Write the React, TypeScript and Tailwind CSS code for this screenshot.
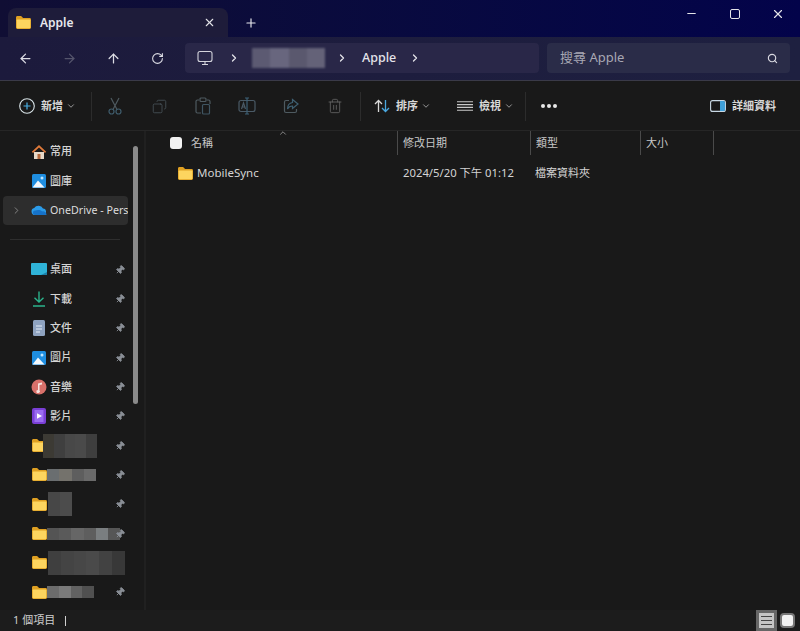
import React from "react";
import {ArrowLeft, ArrowRight, ArrowUp, ChevronDown, ChevronRight, ChevronUp, Copy, Minus, Pin, Plus, RotateCw, Search, Trash2, X} from "lucide-react";

const Folder = ({className = "w-[15px] h-[13px]"}: {className?: string}) => (
    <svg viewBox="0 0 15 13" className={className}>
        <path d="M0 1.5C0 .7.6 0 1.4 0h3.700l2 2h6.500c.8 0 1.400.6 1.400 1.400v8.200c0 .8-.6 1.400-1.400 1.400H1.400C.6 13 0 12.400 0 11.600z" fill="#dfa022" />
        <path d="M.7 4.200c0-.4.3-.7.7-.7h12.200c.4 0 .7.3.7.7v7.400c0 .4-.3.7-.7.7H1.400c-.4 0-.7-.3-.7-.7z" fill="#fdd55f" />
    </svg>
);

const Home = () => (
    <svg viewBox="0 0 16 16" className="w-4 h-4">
        <path d="M3 8h10v7H3z" fill="#e8d9c8" />
        <path d="M6.500 10h3v5h-3z" fill="#b4683c" />
        <path d="M8 1 .8 7.800l1.200 1.200L8 3.400 14 9l1.200-1.200z" fill="#e07a3a" />
    </svg>
);

const Photo = ({className = ""}: {className?: string}) => (
    <svg viewBox="0 0 16 16" className={`w-4 h-4 ${className}`}>
        <rect x="1" y="1" width="14" height="14" rx="1.500" fill="#1f8ee0" />
        <circle cx="11" cy="5" r="1.500" fill="#bfe6ff" />
        <path d="M1.500 14.500 7 7.500l6.500 7z" fill="#f4f8fc" />
    </svg>
);

const Desktop = () => (
    <svg viewBox="0 0 16 13" className="w-4 h-[13px]">
        <rect width="16" height="12" rx="1" fill="#2fb3d8" />
        <path d="M10 12h6v-3z" fill="#1b7fa8" />
    </svg>
);

const Doc = () => (
    <svg viewBox="0 0 12 16" className="w-3 h-4 mx-[2px]">
        <rect width="12" height="16" rx="1.500" fill="#8fa3c0" />
        <path d="M3 6h6M3 9h6M3 12h4" stroke="#e6edf6" strokeWidth="1.200" />
    </svg>
);

const Music = () => (
    <svg viewBox="0 0 16 16" className="w-4 h-4">
        <circle cx="8" cy="8" r="7.500" fill="#d8706a" />
        <path d="M7 11V4.500l4-1v2l-2.500.6V11.500a1.800 1.500 0 1 1-1.500-.5z" fill="#f6e4e0" />
    </svg>
);

const Video = () => (
    <svg viewBox="0 0 14 16" className="w-[14px] h-4 mx-[1px]">
        <rect width="14" height="16" rx="2" fill="#7a3fd6" />
        <rect x="2.500" y="2" width="9" height="12" fill="#9a6cf0" />
        <path d="M5 5.200 10 8l-5 2.800z" fill="#fff" />
    </svg>
);

const Cloud = () => (
    <svg viewBox="0 0 16 10" className="w-4 h-[10px]">
        <path d="M4 10a3.500 3.500 0 0 1-.8-6.900A5 5 0 0 1 12 3.500 3.300 3.300 0 0 1 12.500 10z" fill="#2b9be8" />
        <path d="M4 10a2.200 2.200 0 0 1 .2-4.400c2-1 5-1 7 .8 1.800-.6 4 .5 4.400 3.600z" fill="#1672c8" />
    </svg>
);

const Download = () => (
    <svg viewBox="0 0 14 16" fill="none" stroke="#2bb38c" strokeWidth="1.400" className="w-[14px] h-4 mx-[1px]">
        <path d="M7 .5v10.500M2.500 6.800 7 11l4.500-4.200M1 15h12" />
    </svg>
);

const PcIcon = () => (
    <svg viewBox="0 0 16 16" fill="none" stroke="#d4d4dc" strokeWidth="1.100" className="w-4 h-4">
        <rect x="1" y="1.500" width="14" height="10" rx="2" />
        <path d="M5 14.500h6M8 11.500v3" />
    </svg>
);

const ScissorsIcon = () => (
    <svg viewBox="0 0 16 18" fill="none" stroke="#3f5c6c" strokeWidth="1.200" className="w-4 h-[18px]">
        <path d="M4 1 10 12.500M12 1 6 12.500" stroke="#4e5a60" />
        <circle cx="4.500" cy="14.500" r="2.500" />
        <circle cx="11.500" cy="14.500" r="2.500" />
    </svg>
);

const PasteIcon = () => (
    <svg viewBox="0 0 16 18" fill="none" stroke="#4e5a60" strokeWidth="1.200" className="w-4 h-[18px]">
        <path d="M4 3H2.500A1.500 1.500 0 0 0 1 4.500v10A1.500 1.500 0 0 0 2.500 16H6M12 3h1.500A1.500 1.500 0 0 1 15 4.500V7" />
        <rect x="5" y="1" width="6" height="3.500" rx="1" />
        <rect x="7.500" y="7.500" width="7" height="9.500" rx="1" stroke="#3f5562" />
    </svg>
);

const RenameIcon = () => (
    <svg viewBox="0 0 18 18" fill="none" stroke="#4a5a66" strokeWidth="1.200" className="w-[18px] h-[18px]">
        <rect x="1" y="3.500" width="16" height="11" rx="2" />
        <path d="M9 1v16M7 1h4M7 17h4" stroke="#3c6076" />
        <path d="M3.500 12 5.500 6l2 6M4.200 10h2.600" />
    </svg>
);

const ShareIcon = () => (
    <svg viewBox="0 0 16 16" fill="none" stroke="#4e5a60" strokeWidth="1.200" className="w-4 h-4">
        <path d="M6 2.500H3A1.500 1.500 0 0 0 1.500 4v9A1.500 1.500 0 0 0 3 14.500h9a1.500 1.500 0 0 0 1.500-1.500v-2" />
        <path d="M9.500 1.500 15 6l-5.500 4.500V8C7 8 5.500 9 4.500 11c0-3.500 2-6 5-6.500z" stroke="#3f6072" />
    </svg>
);

const SortIcon = () => (
    <svg viewBox="0 0 16 14" fill="none" strokeWidth="1.300" className="w-4 h-[14px]">
        <path d="M4.500 13V1.500M1 5l3.500-3.500L8 5" stroke="#d8d8d8" />
        <path d="M11.500 1v11.500M8 9l3.500 3.500L15 9" stroke="#4aa8e0" />
    </svg>
);

const ViewIcon = () => (
    <svg viewBox="0 0 16 10" stroke="#c8c8c8" strokeWidth="1.100" className="w-4 h-[10px]">
        <path d="M0 .8h16M0 3.600h16M0 6.400h16M0 9.200h16" />
    </svg>
);

const DetailsIcon = () => (
    <svg viewBox="0 0 16 12" fill="none" className="w-4 h-3">
        <rect x=".6" y=".6" width="14.800" height="10.800" rx="2" stroke="#c8d8e4" strokeWidth="1.100" />
        <path d="M10 1h3.500A1.500 1.500 0 0 1 15 2.500v7a1.500 1.500 0 0 1-1.500 1.500H10z" fill="#3f9fd8" />
    </svg>
);

const Mosaic = ({cells, className}: {cells: string[]; className: string}) => (
    <div className={`flex ${className}`}>
        {cells.map((c, i) => <div key={i} className={`flex-1 ${c}`} />)}
    </div>
);

const ToolBtn = ({children}: {children: React.ReactNode}) => (
    <div className="w-11 flex justify-center items-center">{children}</div>
);

const Divider = () => <div className="w-px h-[29px] bg-[#2c2c2c]" />;

const NavRow = ({icon, label, pinned}: {icon: React.ReactNode; label?: React.ReactNode; pinned?: boolean}) => (
    <div className="h-[29.33px] flex items-center pl-[31px] w-[128px] shrink-0">
        <div className="w-4 flex justify-center shrink-0">{icon}</div>
        <div className="ml-[3px] flex-1 min-w-0 flex items-center text-[11px] font-medium text-[#d4d4d4]">{label}</div>
        {pinned && <Pin size={10} className="mr-[3px] text-[#8a8f96] fill-[#8a8f96] rotate-45 shrink-0" />}
    </div>
);

const mosaics = [
    {cls: "w-[54px] h-[24px] -ml-[7px]", cells: ["bg-[#3c3a34]", "bg-[#3f3f3f]", "bg-[#484848]", "bg-[#4a4a4a]", "bg-[#3e3e3e]"]},
    {cls: "w-[49px] h-[12px] -ml-[3px]", cells: ["bg-[#6a6e70]", "bg-[#74726c]", "bg-[#5e5e5e]", "bg-[#6a6a6a]"]},
    {cls: "w-[24px] h-[24px] -ml-[2px]", cells: ["bg-[#474747]", "bg-[#4c4c4c]"]},
    {cls: "w-[73px] h-[12px] -ml-[3px]", cells: ["bg-[#545454]", "bg-[#5a5a5a]", "bg-[#666666]", "bg-[#5e5e5e]", "bg-[#7a7e80]", "bg-[#565656]"]},
    {cls: "w-[77px] h-[24px] -ml-[2px]", cells: ["bg-[#3f3f3f]", "bg-[#444444]", "bg-[#474747]", "bg-[#4a4a4a]", "bg-[#424242]", "bg-[#383838]"]},
    {cls: "w-[47px] h-[12px] -ml-[3px]", cells: ["bg-[#6c6c6c]", "bg-[#7a7a7a]", "bg-[#626262]", "bg-[#505050]"]},
];

const columns = [
    {w: "w-[133px]", text: "修改日期"},
    {w: "w-[110px]", text: "類型"},
    {w: "w-[74px]", text: "大小"},
];

export default function App() {
    return (
        <div className="w-[800px] h-[631px] flex flex-col overflow-hidden bg-[#191919] text-[#d8d8d8] font-['Noto_Sans','Noto_Sans_CJK_TC',sans-serif]">
            {/* title bar */}
            <div className="h-[37px] shrink-0 flex items-end pl-2 bg-gradient-to-r from-[#100e34] to-[#03034a]">
                <div className="w-[220px] h-[29px] rounded-t-lg bg-[#1e1c3a] flex items-center pl-2 pr-3">
                    <Folder />
                    <span className="ml-[9px] text-[12px] font-semibold text-[#e8e8ee]">Apple</span>
                    <X size={13} className="ml-auto text-[#e4e4e8]" />
                </div>
                <div className="ml-4 h-[29px] flex items-center"><Plus size={14} strokeWidth={2} className="text-[#e8e8ee]" /></div>
                <div className="ml-auto self-start flex">
                    <div className="w-[43px] h-[27px] flex items-center justify-center"><Minus size={13} className="text-[#e4e4e8]" /></div>
                    <div className="w-[43px] h-[27px] flex items-center justify-center"><div className="w-[10px] h-[10px] rounded-[2px] border-[1.5px] border-[#e4e4e8]" /></div>
                    <div className="w-[43px] h-[27px] flex items-center justify-center mr-[1px]"><X size={14} className="text-[#e4e4e8]" /></div>
                </div>
            </div>

            {/* nav row */}
            <div className="h-[44px] shrink-0 flex items-start pt-[6px] bg-gradient-to-r from-[#1c1a3c] to-[#1e2040] border-b border-[#3a3a48]">
                <div className="w-[185px] h-[30px] flex items-center pl-[3px]">
                    <div className="w-11 flex justify-center"><ArrowLeft size={15} className="text-[#dcdce4]" /></div>
                    <div className="w-11 flex justify-center"><ArrowRight size={15} className="text-[#55556c]" /></div>
                    <div className="w-11 flex justify-center"><ArrowUp size={15} className="text-[#dcdce4]" /></div>
                    <div className="w-11 flex justify-center"><RotateCw size={13} className="text-[#dcdce4]" /></div>
                </div>
                <div className="w-[354px] h-[30px] rounded bg-[#292748] flex items-center pl-[12px] text-[12.500px] font-medium text-[#e4e4ea]">
                    <PcIcon />
                    <ChevronRight size={12} strokeWidth={2.500} className="ml-[15px]" />
                    <Mosaic className="ml-[12px] w-[73px] h-[20px] blur-[1px]" cells={["bg-[#5c5a72]", "bg-[#68667e]", "bg-[#5a586e]", "bg-[#646278]"]} />
                    <ChevronRight size={12} strokeWidth={2.500} className="ml-[11px]" />
                    <span className="ml-[14px]">Apple</span>
                    <ChevronRight size={12} strokeWidth={2.500} className="ml-[13px]" />
                </div>
                <div className="ml-2 w-[243px] h-[30px] rounded bg-[#2a2c48] flex items-center pl-[13px] pr-[12px] text-[13px] text-[#a8a8b4]">
                    <span>搜尋 Apple</span>
                    <Search size={11} strokeWidth={2.500} className="ml-auto text-[#d8d8e0]" />
                </div>
            </div>

            {/* toolbar */}
            <div className="h-[50px] shrink-0 flex items-center pt-[1px] pl-[19px] pr-[24px] text-[11px] font-semibold border-b border-[#262626]">
                <svg viewBox="0 0 16 16" fill="none" className="w-4 h-4">
                    <circle cx="8" cy="8" r="7.300" stroke="#d8e4e8" strokeWidth="1.100" />
                    <path d="M8 4.500v7M4.500 8h7" stroke="#4ab0e4" strokeWidth="1.200" />
                </svg>
                <span className="ml-[6px]">新增</span>
                <ChevronDown size={10} className="ml-[3px] text-[#b0b0b0]" />
                <div className="ml-[15px]"><Divider /></div>
                <div className="flex items-center ml-[1px]">
                    <ToolBtn><ScissorsIcon /></ToolBtn>
                    <ToolBtn><Copy size={15} strokeWidth={1.200} className="text-[#4e5a60] -scale-x-100" /></ToolBtn>
                    <ToolBtn><PasteIcon /></ToolBtn>
                    <ToolBtn><RenameIcon /></ToolBtn>
                    <ToolBtn><ShareIcon /></ToolBtn>
                    <ToolBtn><Trash2 size={16} strokeWidth={1.200} className="text-[#6a6a6a]" /></ToolBtn>
                </div>
                <div className="ml-[3px]"><Divider /></div>
                <div className="ml-[13px]"><SortIcon /></div>
                <span className="ml-[6px]">排序</span>
                <ChevronDown size={10} className="ml-[3px] text-[#b0b0b0]" />
                <div className="ml-[26px]"><ViewIcon /></div>
                <span className="ml-[6px]">檢視</span>
                <ChevronDown size={10} className="ml-[3px] text-[#b0b0b0]" />
                <div className="ml-[11px]"><Divider /></div>
                <div className="ml-[15px] flex gap-[2px]">
                    <div className="w-[4px] h-[4px] rounded-full bg-[#e8e8e8]" />
                    <div className="w-[4px] h-[4px] rounded-full bg-[#e8e8e8]" />
                    <div className="w-[4px] h-[4px] rounded-full bg-[#e8e8e8]" />
                </div>
                <div className="ml-auto flex items-center">
                    <DetailsIcon />
                    <span className="ml-[6px]">詳細資料</span>
                </div>
            </div>

            {/* body */}
            <div className="flex-1 min-h-0 flex">
                <div className="w-[146px] shrink-0 flex border-r-2 border-[#202020] pt-[6px] overflow-hidden">
                    <div className="w-[128px] shrink-0 flex flex-col">
                        <NavRow icon={<Home />} label="常用" />
                        <NavRow icon={<Photo />} label="圖庫" />
                        <div className="h-[29.33px] ml-[3px] rounded-sm bg-[#2d2d2d] flex items-center overflow-hidden text-[#dcdcdc] whitespace-nowrap shrink-0">
                            <ChevronRight size={11} className="ml-[8px] text-[#8a8a8a] shrink-0" />
                            <div className="ml-[9px] shrink-0"><Cloud /></div>
                            <span className="ml-[3px] text-[10.700px]">OneDrive - Pers</span>
                        </div>
                        <div className="h-[30px] flex items-center shrink-0">
                            <div className="ml-[10px] w-[110px] h-px bg-[#2e2e2e]" />
                        </div>
                        <NavRow icon={<Desktop />} label="桌面" pinned />
                        <NavRow icon={<Download />} label="下載" pinned />
                        <NavRow icon={<Doc />} label="文件" pinned />
                        <NavRow icon={<Photo />} label="圖片" pinned />
                        <NavRow icon={<Music />} label="音樂" pinned />
                        <NavRow icon={<Video />} label="影片" pinned />
                        {mosaics.map((m, i) => (
                            <NavRow key={i} icon={<Folder />} pinned={i !== 4} label={<Mosaic className={`${m.cls} shrink-0`} cells={m.cells} />} />
                        ))}
                    </div>
                    <div className="ml-[5px] mt-[9px] w-[5px] h-[258px] rounded-full bg-[#8a8a8a] shrink-0" />
                </div>

                <div className="flex-1 min-w-0 flex flex-col">
                    <div className="h-[24px] flex items-stretch text-[11px] text-[#c8c8c8] relative">
                        <div className="w-[251px] flex items-center pl-[24px]">
                            <div className="w-3 h-3 rounded-[3px] bg-[#f2f2f2]" />
                            <span className="ml-[9px]">名稱</span>
                        </div>
                        <ChevronUp size={10} className="absolute left-[132px] top-[-3px] text-[#9a9a9a]" />
                        {columns.map(c => (
                            <div key={c.text} className={`${c.w} flex items-center border-l border-[#4a4a4a] pl-[5px] last:border-r`}>{c.text}</div>
                        ))}
                    </div>
                    <div className="mt-[6px] h-[24px] flex items-center text-[11.500px] text-[#d4d4d4]">
                        <div className="w-[251px] flex items-center pl-[32px]">
                            <Folder />
                            <span className="ml-[4px]">MobileSync</span>
                        </div>
                        <div className="w-[132px] pl-[6px] text-[11.300px] whitespace-nowrap">2024/5/20 下午 01:12</div>
                        <div className="pl-[6px] text-[11px]">檔案資料夾</div>
                    </div>
                </div>
            </div>

            {/* status bar */}
            <div className="h-[21px] shrink-0 flex items-center pl-[13px] text-[11px] text-[#cfcfcf] bg-[#1c1c1c]">
                <span>1 個項目</span>
                <div className="ml-[10px] w-px h-[10px] bg-[#d0d0d0]" />
                <div className="ml-auto flex items-center">
                    <div className="w-[21px] h-[21px] bg-[#666666] flex items-center justify-center">
                        <div className="w-[15px] h-[15px] bg-[#c4c4c4] flex flex-col justify-evenly px-[2px]">
                            <div className="h-px bg-[#444444]" />
                            <div className="h-px bg-[#444444]" />
                            <div className="h-px bg-[#444444]" />
                        </div>
                    </div>
                    <div className="ml-[3px] mr-[5px] w-[15px] h-[15px] bg-[#f2f2f2] border-[2px] border-[#777777] rounded-sm" />
                </div>
            </div>
        </div>
    );
}
